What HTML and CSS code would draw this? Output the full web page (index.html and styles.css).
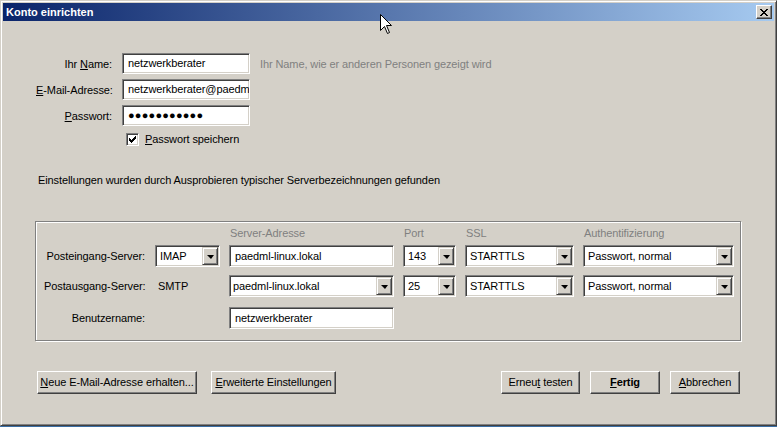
FILE: index.html
```html
<!DOCTYPE html>
<html lang="de">
<head>
<meta charset="utf-8">
<title>Konto einrichten</title>
<link rel="stylesheet" href="styles.css">
</head>
<body>
<div class="window">
  <div class="titlebar">
    <span class="title">Konto einrichten</span>
    <span class="close"><svg width="8" height="7" viewBox="0 0 8 7" shape-rendering="crispEdges"><path d="M0 0h2v1H0z M6 0h2v1H6z M1 1h2v1H1z M5 1h2v1H5z M2 2h4v1H2z M3 3h2v1H3z M2 4h4v1H2z M1 5h2v1H1z M5 5h2v1H5z M0 6h2v1H0z M6 6h2v1H6z" fill="#000"/></svg></span>
  </div>
  <div class="content">
    <div class="account">
      <span class="lbl">Ihr <u>N</u>ame:</span>
      <div class="field">netzwerkberater</div>
      <span class="hint">Ihr Name, wie er anderen Personen gezeigt wird</span>
      <span class="lbl"><u>E</u>-Mail-Adresse:</span>
      <div class="field">netzwerkberater@paedml-linux.lokal</div>
      <span></span>
      <span class="lbl"><u>P</u>asswort:</span>
      <div class="field pw">●●●●●●●●●●●</div>
      <span></span>
      <div class="check-row">
        <span class="checkbox"><svg width="11" height="11" viewBox="0 0 11 11" shape-rendering="crispEdges"><path d="M2 4h1v3H2z M3 5h1v3H3z M4 6h1v3H4z M5 5h1v3H5z M6 4h1v3H6z M7 3h1v3H7z M8 2h1v3H8z" fill="#000"/></svg></span>
        <span><u>P</u>asswort speichern</span>
      </div>
    </div>
    <p class="status">Einstellungen wurden durch Ausprobieren typischer Serverbezeichnungen gefunden</p>
    <div class="group">
      <span></span>
      <span></span>
      <span class="colhead">Server-Adresse</span>
      <span class="colhead">Port</span>
      <span class="colhead">SSL</span>
      <span class="colhead">Authentifizierung</span>

      <span class="glbl">Posteingang-Server:</span>
      <div class="combo"><span class="val">IMAP</span><span class="drop"></span></div>
      <div class="field srv">paedml-linux.lokal</div>
      <div class="combo"><span class="val">143</span><span class="drop"></span></div>
      <div class="combo"><span class="val">STARTTLS</span><span class="drop"></span></div>
      <div class="combo"><span class="val">Passwort, normal</span><span class="drop"></span></div>

      <span class="glbl">Postausgang-Server:</span>
      <span class="plain">SMTP</span>
      <div class="combo"><span class="val tight">paedml-linux.lokal</span><span class="drop"></span></div>
      <div class="combo"><span class="val">25</span><span class="drop"></span></div>
      <div class="combo"><span class="val">STARTTLS</span><span class="drop"></span></div>
      <div class="combo"><span class="val">Passwort, normal</span><span class="drop"></span></div>

      <span class="glbl">Benutzername:</span>
      <span></span>
      <div class="field srv">netzwerkberater</div>
    </div>
    <div class="buttons">
      <div class="btn-group">
        <span class="btn w-new"><span><u>N</u>eue E-Mail-Adresse erhalten...</span></span>
        <span class="btn w-adv"><span><u>E</u>rweiterte Einstellungen</span></span>
      </div>
      <div class="btn-group right">
        <span class="btn w-retry"><span>Erneu<u>t</u> testen</span></span>
        <span class="btn w-done default"><span><u>F</u>ertig</span></span>
        <span class="btn w-cancel"><span><u>A</u>bbrechen</span></span>
      </div>
    </div>
  </div>
  <svg class="cursor" width="13" height="21" viewBox="0 0 13 21"><path d="M0.5 0.5 L0.5 16.5 L4.5 12.5 L7.5 19.5 L9.5 18.5 L6.5 11.5 L11.5 11.5 Z" fill="#fff" stroke="#000" stroke-width="1" stroke-linejoin="miter"/></svg>
</div>
</body>
</html>
```

FILE: styles.css
```css
* { box-sizing: border-box; }
html, body { margin: 0; height: 100%; }
body {
  background: #3a6ea5;
  font-family: "Liberation Sans", Arial, sans-serif;
  font-size: 11px;
  letter-spacing: -0.1px;
  color: #000;
  overflow: hidden;
}
u { text-decoration: underline; text-underline-offset: 1px; }

.window {
  position: relative;
  width: 777px;
  height: 426px;
  background: #d4d0c8;
  border: 1px solid;
  border-color: #d4d0c8 #404040 #404040 #d4d0c8;
  box-shadow: inset 1px 1px 0 #fff, inset -1px -1px 0 #808080;
  padding: 2px;
  display: flex;
  flex-direction: column;
}

.titlebar {
  height: 18px;
  flex: none;
  background: linear-gradient(to right, #0a246a, #a6caf0);
  display: flex;
  align-items: center;
  justify-content: space-between;
  padding: 0 2px 0 3px;
}
.title { color: #fff; font-weight: bold; font-size: 11px; line-height: 18px; letter-spacing: 0; }
.close {
  width: 16px;
  height: 14px;
  background: #d4d0c8;
  border: 1px solid;
  border-color: #fff #404040 #404040 #fff;
  box-shadow: inset -1px -1px 0 #808080;
  display: flex;
  align-items: center;
  justify-content: center;
  padding-right: 1px;
}
.close svg { display: block; }

.content { flex: 1; padding: 32px 34px 0 0; }

.account {
  margin-left: 33px;
  display: grid;
  grid-template-columns: 76px 128px auto;
  grid-template-rows: 21px 21px 21px 16px;
  column-gap: 10px;
  row-gap: 5px;
  align-items: center;
}
.lbl { text-align: right; white-space: nowrap; }
.hint { color: #808080; }

.field {
  height: 21px;
  background: #fff;
  border: 1px solid;
  border-color: #808080 #fff #fff #808080;
  box-shadow: inset 1px 1px 0 #404040, inset -1px -1px 0 #d4d0c8;
  padding: 0 3px 0 5px;
  line-height: 19px;
  white-space: nowrap;
  overflow: hidden;
}
.field.pw { font-size: 11px; letter-spacing: 0.2px; line-height: 18px; }

.check-row {
  grid-column: 2 / span 2;
  display: flex;
  align-items: center;
  gap: 6px;
  padding-left: 4px;
  height: 16px;
}
.checkbox {
  width: 13px;
  height: 13px;
  background: #fff;
  border: 1px solid;
  border-color: #808080 #fff #fff #808080;
  box-shadow: inset 1px 1px 0 #404040, inset -1px -1px 0 #d4d0c8;
  flex: none;
}
.checkbox svg { display: block; }

.status { margin: 27px 0 0 35px; line-height: 13px; }

.group {
  margin: 34px 0 0 32px;
  width: 706px;
  height: 120px;
  border: 1px solid #808080;
  box-shadow: 1px 1px 0 #fff, inset 1px 1px 0 #fff;
  padding: 3px 5px 11px 8px;
  display: grid;
  grid-template-columns: 102px 65px 165px 53px 109px 151px;
  grid-template-rows: 20px 30px 32px 22px;
  column-gap: 9px;
  align-items: start;
}
.colhead { color: #808080; line-height: 16px; padding-left: 1px; }
.glbl { text-align: right; line-height: 22px; padding-right: 1px; white-space: nowrap; }
.plain { line-height: 22px; padding-left: 3px; }
.group .field { height: 22px; line-height: 20px; padding-left: 5px; }

.combo {
  height: 22px;
  background: #fff;
  border: 1px solid;
  border-color: #808080 #fff #fff #808080;
  box-shadow: inset 1px 1px 0 #404040, inset -1px -1px 0 #d4d0c8;
  padding: 1px;
  display: flex;
  align-items: stretch;
}
.val { flex: 1; padding-left: 3px; line-height: 18px; white-space: nowrap; overflow: hidden; }
.val.tight { padding-left: 2px; }
.drop {
  width: 16px;
  flex: none;
  background: #d4d0c8;
  border: 1px solid;
  border-color: #d4d0c8 #404040 #404040 #d4d0c8;
  box-shadow: inset 1px 1px 0 #fff, inset -1px -1px 0 #808080;
  display: flex;
  align-items: center;
  justify-content: center;
}
.drop::after {
  content: "";
  width: 0;
  height: 0;
  border-left: 4px solid transparent;
  border-right: 3px solid transparent;
  border-top: 4px solid #000;
  margin-top: 1px;
}

.buttons {
  margin: 30px 0 0 34px;
  display: flex;
  justify-content: space-between;
}
.btn-group { display: flex; gap: 14px; }
.btn-group.right { gap: 10px; }
.btn {
  height: 23px;
  background: #d4d0c8;
  border: 1px solid;
  border-color: #fff #404040 #404040 #fff;
  box-shadow: inset -1px -1px 0 #808080;
  display: flex;
  align-items: center;
  justify-content: center;
  white-space: nowrap;
  padding-bottom: 1px;
}
.btn.default { font-weight: bold; }
.w-new { width: 160px; }
.w-adv { width: 125px; }
.w-retry { width: 79px; }
.w-done { width: 70px; }
.w-cancel { width: 70px; }

.cursor { position: absolute; left: 379px; top: 13px; }
```
